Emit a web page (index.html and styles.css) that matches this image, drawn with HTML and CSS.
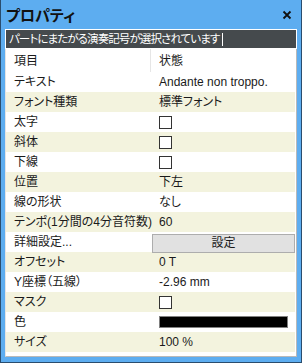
FILE: index.html
```html
<!DOCTYPE html>
<html lang="ja">
<head>
  <meta charset="UTF-8">
  <title>プロパティ</title>
  <link rel="stylesheet" href="styles.css">
</head>
<body>
  <div class="window">
    <div class="titlebar">
      <span class="title">プロパティ</span>
      <svg class="close" width="10" height="10" viewBox="0 0 10 10">
        <path d="M1.5 1.5 L8.5 8.5 M8.5 1.5 L1.5 8.5" stroke="#111" stroke-width="1.8" fill="none"/>
      </svg>
    </div>

    <div class="status">パートにまたがる演奏記号が選択されています<span class="caret"></span></div>

    <div class="grid">
      <div class="row head">
        <div class="cell key">項目</div>
        <div class="cell val">状態</div>
      </div>
      <div class="row">
        <div class="cell key">テキスト</div>
        <div class="cell val">Andante non troppo.</div>
      </div>
      <div class="row alt">
        <div class="cell key">フォント種類</div>
        <div class="cell val">標準フォント</div>
      </div>
      <div class="row">
        <div class="cell key">太字</div>
        <div class="cell val"><span class="check"></span></div>
      </div>
      <div class="row alt">
        <div class="cell key">斜体</div>
        <div class="cell val"><span class="check"></span></div>
      </div>
      <div class="row">
        <div class="cell key">下線</div>
        <div class="cell val"><span class="check"></span></div>
      </div>
      <div class="row alt">
        <div class="cell key">位置</div>
        <div class="cell val">下左</div>
      </div>
      <div class="row">
        <div class="cell key">線の形状</div>
        <div class="cell val">なし</div>
      </div>
      <div class="row alt">
        <div class="cell key">テンポ(1分間の4分音符数)</div>
        <div class="cell val">60</div>
      </div>
      <div class="row">
        <div class="cell key">詳細設定...</div>
        <div class="cell btn-cell"><button class="btn">設定</button></div>
      </div>
      <div class="row alt">
        <div class="cell key">オフセット</div>
        <div class="cell val">0 T</div>
      </div>
      <div class="row">
        <div class="cell key">Y座標（五線）</div>
        <div class="cell val">-2.96 mm</div>
      </div>
      <div class="row alt">
        <div class="cell key">マスク</div>
        <div class="cell val"><span class="check"></span></div>
      </div>
      <div class="row">
        <div class="cell key">色</div>
        <div class="cell val"><span class="swatch"></span></div>
      </div>
      <div class="row alt">
        <div class="cell key">サイズ</div>
        <div class="cell val">100 %</div>
      </div>
    </div>
  </div>
</body>
</html>
```

FILE: styles.css
```css
body {
  margin: 0;
  font-family: "Liberation Sans", "Noto Sans CJK JP", sans-serif;
  font-size: 12px;
  font-feature-settings: "palt";
  color: #1a1a1a;
}
.window {
  width: 302px;
  height: 363px;
  box-sizing: border-box;
  background: #5dadf0;
  border: 1px solid #2a4d6e;
  border-top: none;
  padding: 0 4px 5px 4px;
  display: flex;
  flex-direction: column;
}
.titlebar {
  height: 29px;
  display: flex;
  align-items: center;
  justify-content: space-between;
  padding: 0 3px 0 1px;
}
.title {
  font-size: 15px;
  font-weight: bold;
  color: #111;
}
.close { margin-right: 2px; }
.status {
  height: 20px;
  box-sizing: border-box;
  border: 1px solid #fff;
  background: #454a4d;
  color: #fff;
  padding: 0 3px;
  font-size: 11.5px;
  letter-spacing: -0.9px;
  line-height: 18px;
  display: flex;
  align-items: center;
}
.caret {
  display: inline-block;
  width: 1px;
  height: 13px;
  background: #fff;
  margin-left: 3px;
}
.grid {
  flex: 1;
  background: #fff;
  border-left: 1px solid #e4e4e4;
  border-right: 1px solid #b9b9b9;
  border-bottom: 1px solid #b9b9b9;
  padding-right: 1px;
}
.row {
  display: flex;
  height: 20px;
  line-height: 20px;
}
.row.alt { background: #f3f3de; }
.row.head { height: 23px; line-height: 24px; }
.row.head .key { border-right: 1px solid #e6e6e6; }
.cell { white-space: nowrap; }
.key {
  width: 145px;
  box-sizing: border-box;
  padding-left: 8px;
}
.val {
  flex: 1;
  padding-left: 8px;
  display: flex;
  align-items: center;
}
.btn-cell {
  flex: 1;
  padding: 1px 0 0 1px;
}
.btn {
  width: 100%;
  height: 19px;
  margin: 0;
  padding: 0;
  border: 1px solid #adadad;
  background: #e1e1e1;
  font: inherit;
  color: #1a1a1a;
  line-height: 16px;
}
.check {
  width: 13px;
  height: 13px;
  box-sizing: border-box;
  border: 1px solid #333;
  background: #fff;
}
.swatch {
  width: 129px;
  height: 12px;
  box-sizing: border-box;
  border: 1px solid #808080;
  background: #000;
}
```
